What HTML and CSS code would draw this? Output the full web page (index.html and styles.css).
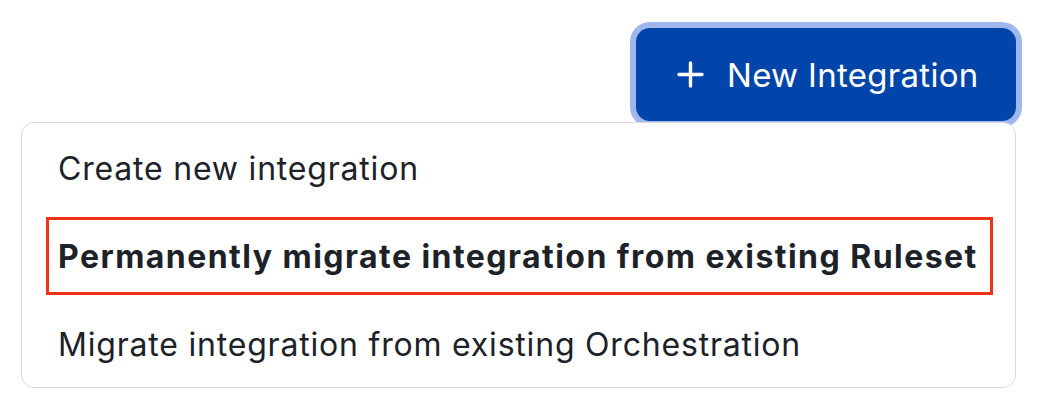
FILE: index.html
```html
<!DOCTYPE html>
<html>
<head>
<meta charset="utf-8">
<link rel="stylesheet" href="styles.css">
</head>
<body>
<div class="page">
  <button class="new-btn" type="button">
    <svg class="plus" width="27" height="27" viewBox="0 0 27 27"><path d="M13.5 2v23M2 13.5h23" stroke="#fff" stroke-width="3.4" stroke-linecap="round" fill="none"/></svg>
    <span>New Integration</span>
  </button>
  <div class="menu">
    <div class="item">Create new integration</div>
    <div class="item item-active">Permanently migrate integration from existing Ruleset</div>
    <div class="item">Migrate integration from existing Orchestration</div>
  </div>
</div>
</body>
</html>
```

FILE: styles.css
```css
html, body {
  margin: 0;
  padding: 0;
  background: #ffffff;
}
.page {
  display: flex;
  flex-direction: column;
  align-items: flex-end;
  padding: 28px 28px 0 21px;
  font-family: Inter, "Noto Sans", sans-serif;
}
.new-btn {
  display: flex;
  align-items: center;
  gap: 23px;
  height: 93px;
  width: 380px;
  padding: 0 0 0 41px;
  border: none;
  border-radius: 14px;
  background: #0245aa;
  color: #ffffff;
  font-family: Inter, "Noto Sans", sans-serif;
  font-size: 33px;
  font-weight: 400;
  letter-spacing: 0.3px;
  box-shadow: 0 0 0 6px #9fb7ec;
}
.plus {
  flex: none;
}
.menu {
  position: relative;
  z-index: 1;
  align-self: stretch;
  margin-top: 1px;
  height: 266px;
  box-sizing: border-box;
  border: 1px solid #dadada;
  border-radius: 13px;
  background: #ffffff;
  padding-top: 1px;
  color: #1d2128;
  font-size: 32px;
  letter-spacing: 0.8px;
}
.item {
  display: flex;
  align-items: center;
  height: 88px;
  box-sizing: border-box;
  margin: 0 22px 0 24px;
  padding-left: 12px;
  white-space: nowrap;
}
.item-active {
  height: 78px;
  margin-top: 5px;
  margin-bottom: 5px;
  border: 3px solid #f1311a;
  padding-left: 9px;
  font-weight: 700;
  letter-spacing: 1.45px;
}
```
